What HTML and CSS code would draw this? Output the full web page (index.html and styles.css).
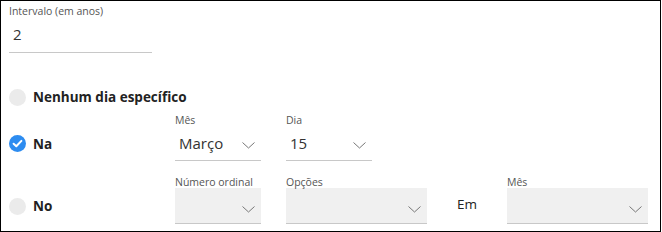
FILE: index.html
```html
<!DOCTYPE html>
<html lang="pt">
  <head>
    <meta charset="UTF-8" />
    <title>Recorrência</title>
    <link rel="stylesheet" href="styles.css">
  </head>
  <body>
    <div class="panel">
      <!-- intervalo -->
      <div class="interval">
        <div class="field-label">Intervalo (em anos)</div>
        <div class="text-input">2</div>
      </div>

      <!-- opção 1 -->
      <div class="option option-plain">
        <div class="choice">
          <span class="radio"></span>
          <span class="choice-text">Nenhum dia específico</span>
        </div>
      </div>

      <!-- opção 2 -->
      <div class="option option-line">
        <div class="choice">
          <span class="radio checked">
            <svg width="17" height="17" viewBox="0 0 17 17">
              <circle cx="8.5" cy="8.5" r="8.5" fill="#2d8cf0" />
              <path d="M4.6 8.8 L7.3 11.3 L12.4 5.9" fill="none" stroke="#fff" stroke-width="2" stroke-linecap="round" stroke-linejoin="round" />
            </svg>
          </span>
          <span class="choice-text">Na</span>
        </div>
        <div class="field small">
          <div class="field-label">Mês</div>
          <div class="select">
            <span>Março</span>
            <svg class="chevron" width="13" height="7" viewBox="0 0 13 7"><path d="M0.5 0.5 L6.5 6 L12.5 0.5" fill="none" stroke="#777" stroke-width="1" /></svg>
          </div>
        </div>
        <div class="field small">
          <div class="field-label">Dia</div>
          <div class="select">
            <span>15</span>
            <svg class="chevron" width="13" height="7" viewBox="0 0 13 7"><path d="M0.5 0.5 L6.5 6 L12.5 0.5" fill="none" stroke="#777" stroke-width="1" /></svg>
          </div>
        </div>
      </div>

      <!-- opção 3 -->
      <div class="option option-box">
        <div class="choice">
          <span class="radio"></span>
          <span class="choice-text">No</span>
        </div>
        <div class="field small">
          <div class="field-label">Número ordinal</div>
          <div class="select filled">
            <span></span>
            <svg class="chevron" width="13" height="7" viewBox="0 0 13 7"><path d="M0.5 0.5 L6.5 6 L12.5 0.5" fill="none" stroke="#777" stroke-width="1" /></svg>
          </div>
        </div>
        <div class="field wide">
          <div class="field-label">Opções</div>
          <div class="select filled">
            <span></span>
            <svg class="chevron" width="13" height="7" viewBox="0 0 13 7"><path d="M0.5 0.5 L6.5 6 L12.5 0.5" fill="none" stroke="#777" stroke-width="1" /></svg>
          </div>
        </div>
        <div class="em">Em</div>
        <div class="field wide last">
          <div class="field-label">Mês</div>
          <div class="select filled">
            <span></span>
            <svg class="chevron" width="13" height="7" viewBox="0 0 13 7"><path d="M0.5 0.5 L6.5 6 L12.5 0.5" fill="none" stroke="#777" stroke-width="1" /></svg>
          </div>
        </div>
      </div>
    </div>
  </body>
</html>
```

FILE: styles.css
```css
body {
  margin: 0;
  font-family: "Open Sans", "Noto Sans", sans-serif;
  color: #333;
}

.panel {
  width: 659px;
  height: 227px;
  border: 1px solid #000;
  padding-top: 3px;
  box-sizing: content-box;
}

/* rótulos pequenos */
.field-label {
  font-size: 10.5px;
  line-height: 12px;
  color: #555;
  height: 12px;
  white-space: nowrap;
}

.interval {
  margin-left: 8px;
  width: 143px;
}

.interval .field-label {
  height: 14px;
  line-height: 14px;
}

.text-input {
  height: 34px;
  line-height: 32px;
  padding-left: 4px;
  font-size: 15px;
  border-bottom: 1px solid #c8c8c8;
}

/* linhas de opções */
.option {
  display: flex;
  align-items: flex-end;
}

.option > * {
  flex-shrink: 0;
}

.option-plain {
  margin-top: 34px;
}

.option-line {
  margin-top: 7px;
}

.option-box {
  margin-top: 15px;
}

.choice {
  width: 166px;
  margin-left: 8px;
  display: flex;
  align-items: center;
  gap: 7px;
  height: 20px;
  white-space: nowrap;
}

.option-line .choice {
  height: 35px;
}

.option-box .choice {
  height: 36px;
}

.radio {
  width: 17px;
  height: 17px;
  border-radius: 50%;
  background-color: #ebebeb;
  display: inline-block;
  flex-shrink: 0;
}

.radio.checked {
  background: none;
}

.radio svg {
  display: block;
}

.choice-text {
  font-size: 13.5px;
  font-weight: bold;
  color: #222;
}

.field {
  margin-right: 25px;
}

.field.last {
  margin-right: 0;
}

.field.small {
  width: 86px;
}

.field.wide {
  width: 141px;
}

.select {
  display: flex;
  align-items: center;
  justify-content: space-between;
  height: 34px;
  padding: 0 6px 0 4px;
  font-size: 15px;
  color: #333;
  border-bottom: 1px solid #c8c8c8;
}

.select .chevron {
  margin-top: 4px;
}

.select.filled {
  height: 35px;
  background-color: #f0f0f0;
}

.select.filled .chevron {
  margin-top: 8px;
}

.em {
  width: 50px;
  height: 36px;
  line-height: 32px;
  margin-left: 5px;
  font-size: 13.5px;
  color: #222;
}
```
